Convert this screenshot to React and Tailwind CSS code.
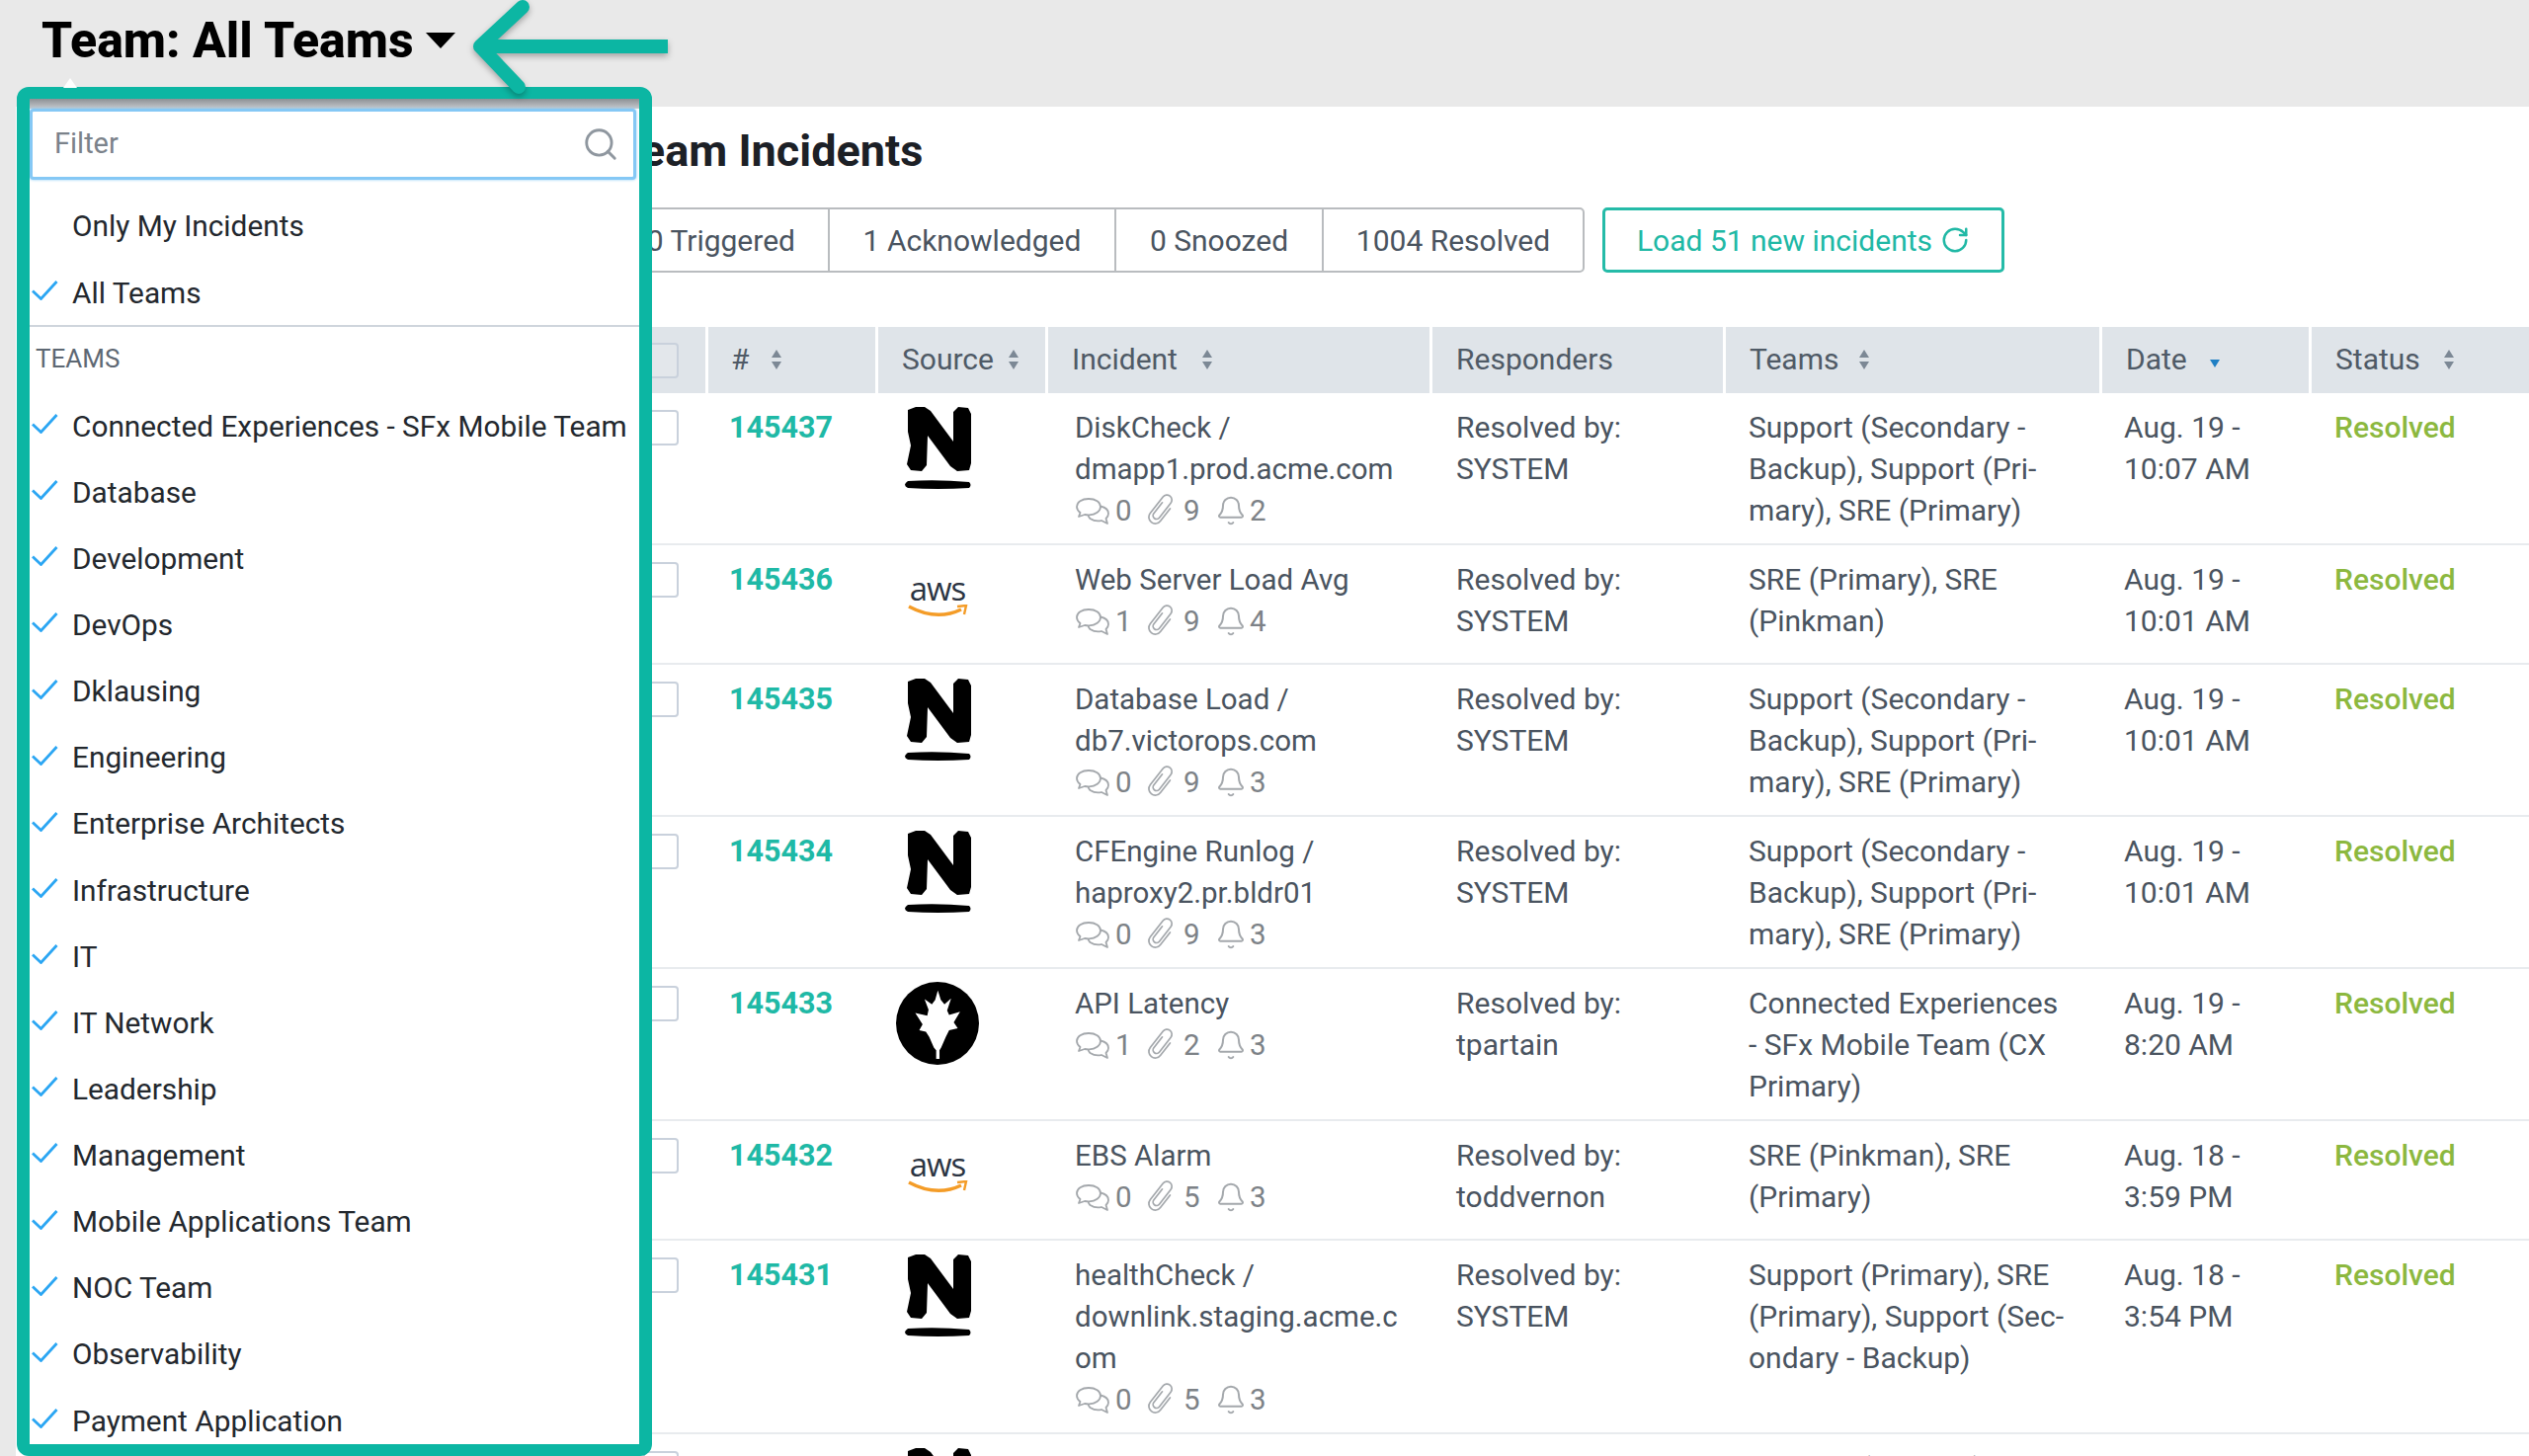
import React from "react";
import { Bell, Search, RotateCw } from "lucide-react";

const GRID = "grid grid-cols-[92px_172px_172px_389px_297px_381px_212px_222px]";
const HEAD_GRID = "grid grid-cols-[91px_172px_172px_389px_297px_381px_212px_223px]";
const SUPPORT = ["Support (Secondary -", "Backup), Support (Pri-", "mary), SRE (Primary)"];
const rows = [
  { id: "145437", logo: "n", inc: ["DiskCheck /", "dmapp1.prod.acme.com"], c: [0, 9, 2], by: "SYSTEM", teams: SUPPORT, date: ["Aug. 19 -", "10:07 AM"] },
  { id: "145436", logo: "aws", inc: ["Web Server Load Avg"], c: [1, 9, 4], by: "SYSTEM", teams: ["SRE (Primary), SRE", "(Pinkman)"], date: ["Aug. 19 -", "10:01 AM"] },
  { id: "145435", logo: "n", inc: ["Database Load /", "db7.victorops.com"], c: [0, 9, 3], by: "SYSTEM", teams: SUPPORT, date: ["Aug. 19 -", "10:01 AM"] },
  { id: "145434", logo: "n", inc: ["CFEngine Runlog /", "haproxy2.pr.bldr01"], c: [0, 9, 3], by: "SYSTEM", teams: SUPPORT, date: ["Aug. 19 -", "10:01 AM"] },
  { id: "145433", logo: "oak", inc: ["API Latency"], c: [1, 2, 3], by: "tpartain", teams: ["Connected Experiences", "- SFx Mobile Team (CX", "Primary)"], date: ["Aug. 19 -", "8:20 AM"] },
  { id: "145432", logo: "aws", inc: ["EBS Alarm"], c: [0, 5, 3], by: "toddvernon", teams: ["SRE (Pinkman), SRE", "(Primary)"], date: ["Aug. 18 -", "3:59 PM"] },
  { id: "145431", logo: "n", inc: ["healthCheck /", "downlink.staging.acme.c", "om"], c: [0, 5, 3], by: "SYSTEM", teams: ["Support (Primary), SRE", "(Primary), Support (Sec-", "ondary - Backup)"], date: ["Aug. 18 -", "3:54 PM"] },
  { id: "145430", logo: "n", inc: ["DiskCheck /"], c: [0, 5, 3], by: "SYSTEM", teams: ["Support (Primary), SRE"], date: ["Aug. 18 -"] },
];
const teams = ["Connected Experiences - SFx Mobile Team", "Database", "Development", "DevOps", "Dklausing", "Engineering", "Enterprise Architects", "Infrastructure", "IT", "IT Network", "Leadership", "Management", "Mobile Applications Team", "NOC Team", "Observability", "Payment Application"];

function Lines({ items }) {
  return items.map((t) => <div key={t} className="whitespace-nowrap">{t}</div>);
}
function Sort({ className = "" }) {
  return (
    <svg width="12" height="22" viewBox="0 0 12 22" className={className}>
      <path d="M6 1 L11 9 H1 Z M6 21 L11 13 H1 Z" fill="#7c8895" />
    </svg>
  );
}
function Check() {
  return (
    <svg width="27" height="20" viewBox="0 0 27 20" className="shrink-0" fill="none">
      <path d="M1 10.5 L9.5 18.5 L25.5 1" stroke="#2ba6f3" strokeWidth="2.8" />
    </svg>
  );
}
function NLogo() {
  return (
    <svg width="68" height="84" viewBox="0 0 68 84" className="ml-[8px]">
      <path d="M4 4 L12 1 L21 1 L27 5 L50 36 L50 6 L55 1 L65 2 L68 8 L68 58 L66 65 L54 66 L47 61 L24 30 L23 60 L18 66 L7 65 L3 59 L7 40 L4 26 Z" fill="#000" />
      <path d="M4 76 Q34 74 66 77 Q69 80 66 83 Q34 85 4 83 Q-2 80 4 76 Z" fill="#000" />
    </svg>
  );
}
function AwsLogo() {
  return (
    <div className="flex h-[78px] w-[84px] flex-col items-center justify-center">
      <span className="font-['Open_Sans',sans-serif] text-[33px] font-medium leading-[26px] tracking-[-1px] text-[#2b3442]">aws</span>
      <svg width="62" height="14" viewBox="0 0 62 14" className="mt-[3px]" fill="none">
        <path d="M2 2 Q30 17 55 5" stroke="#f49c27" strokeWidth="3.4" />
        <path d="M51 2 L60 1 L58 10" stroke="#f49c27" strokeWidth="2.4" />
      </svg>
    </div>
  );
}
function OakLogo() {
  return (
    <svg width="84" height="84" viewBox="52 40 250 250">
      <circle cx="177" cy="165" r="125" fill="#000" />
      <polygon fill="#fff" points="178,66 187,94 198,108 218,90 206,126 212,140 245,130 226,162 238,180 212,186 202,206 188,238 183,246 183,272 173,272 173,246 166,238 152,206 142,190 122,186 132,168 110,134 146,142 150,124 138,92 160,108 170,94" />
    </svg>
  );
}
function Comments() {
  return (
    <svg width="36" height="28" viewBox="0 0 36 28" fill="none" stroke="#a4a8ac" strokeWidth="1.8" strokeLinejoin="round">
      <path d="M14 2 C7 2 2 5.5 2 10 C2 12.5 3.5 14.5 5.5 16 L4 20 L10 18 C11.5 18.3 13 18.5 14.5 18.4 C21 18 26 14.5 26 10 C26 5.5 21 2 14 2 Z" />
      <path d="M26 9.5 C31 10.5 34 13.5 34 17 C34 19 33 20.6 31.5 22 L33 27 L27 24 C23 25 18.5 24 15.5 22 C14.5 21 13.8 20 13.5 18.6" />
    </svg>
  );
}
function Clip() {
  return (
    <svg width="38" height="38" viewBox="-4 -2 38 38" fill="none" stroke="#a4a8ac" strokeWidth="1.7" strokeLinecap="round" className="ml-[5px]">
      <g transform="rotate(38 15 16)">
        <path d="M11 10 V24 a3.5 3.5 0 0 0 7 0 V5 a5 5 0 0 0 -10 0 V26 a6.5 6.5 0 0 0 13 0 V10" />
      </g>
    </svg>
  );
}
function Meta({ c }) {
  return (
    <div className="flex h-[42px] items-center text-[#7d8287]">
      <Comments />
      <span className="ml-[5px] w-[23px]">{c[0]}</span>
      <Clip />
      <span className="ml-[3px] w-[23px]">{c[1]}</span>
      <Bell size={32} strokeWidth={1.5} color="#a4a8ac" className="ml-[9px]" />
      <span className="ml-[3px]">{c[2]}</span>
    </div>
  );
}
function Box({ header }) {
  return <div className={`h-[36px] w-[36px] rounded-[4px] border-2 border-[#c9d1dc] ${header ? "bg-[#e3e7eb]" : "bg-white"}`} />;
}
function HeadCell({ label, sort, gap, blue, pad = "pl-[24px]" }) {
  return (
    <div className={`flex items-center pb-[2px] ${pad}`}>
      <span>{label}</span>
      {sort && <Sort className={gap} />}
      {blue && (
        <svg width="12" height="8" viewBox="0 0 12 8" className={`${gap} mt-[8px]`}>
          <path d="M1 0 H11 L6 8 Z" fill="#1f7fc4" />
        </svg>
      )}
    </div>
  );
}

function Dropdown() {
  return (
    <div className="absolute left-[17px] top-[88px] flex h-[1386px] w-[643px] flex-col overflow-hidden rounded-[12px] border-x-[13px] border-y-[12px] border-[#0cb6a3] bg-white text-[29.8px]">
      <div className="h-[10px] shrink-0 bg-gradient-to-b from-[#8d9095] to-[#c6cace]" />
      <div className="mr-[3px] flex h-[72px] shrink-0 items-center justify-between rounded-[4px] border-[3px] border-[#85c8f5] bg-white pl-[22px] pr-[14px] text-[#7b828a] shadow-[0_0_3px_#85c8f5]">
        <span className="text-[29px]">Filter</span>
        <Search size={38} strokeWidth={1.8} color="#8f979f" />
      </div>
      <div className="mt-[14px] flex h-[66px] shrink-0 items-center pl-[43px] text-[#23282e]">Only My Incidents</div>
      <div className="flex h-[67px] shrink-0 items-center pt-[3px] text-[#23282e]">
        <span className="ml-[2px] w-[41px] -translate-y-[3px]"><Check /></span>All Teams
      </div>
      <div className="h-[2px] shrink-0 bg-[#cfd5dc]" />
      <div className="flex h-[67.5px] shrink-0 items-center pb-[2px] pl-[6px] text-[26px] text-[#5e6873]">TEAMS</div>
      {teams.map((t) => (
        <div key={t} className="flex h-[67.13px] shrink-0 items-center whitespace-nowrap text-[#23282e]">
          <span className="ml-[2px] w-[41px] -translate-y-[3px]"><Check /></span>{t}
        </div>
      ))}
    </div>
  );
}

export default function App() {
  return (
    <div className="relative flex h-[1474px] w-[2560px] flex-col overflow-hidden bg-[#e9e9e9] font-['Roboto',sans-serif] text-[30px] text-[#4a5460]">
      <header className="flex h-[108px] shrink-0 items-center pl-[42px] pb-[26px] font-extrabold text-black">
        <span className="text-[50px]">Team: All Teams</span>
        <svg width="30" height="16" viewBox="0 0 30 16" className="ml-[12px]">
          <path d="M0 0 H30 L15 16 Z" fill="#000" />
        </svg>
      </header>
      <main className="ml-[16px] flex-1 bg-white pl-[607px]">
        <h1 className="mt-[24px] whitespace-nowrap text-[45px] font-bold leading-[42px] text-[#1c2026]">Team Incidents</h1>
        <div className="mt-[36px] flex h-[66px]">
          <div className="flex rounded-[5px] border-2 border-[#b9bcbf]">
            <div className="flex w-[213px] items-center justify-end pr-[33px]">0 Triggered</div>
            <div className="flex w-[290px] items-center justify-center border-l-2 border-[#b9bcbf]">1 Acknowledged</div>
            <div className="flex w-[210px] items-center justify-center border-l-2 border-[#b9bcbf]">0 Snoozed</div>
            <div className="flex w-[264px] items-center justify-center border-l-2 border-[#b9bcbf]">1004 Resolved</div>
          </div>
          <div className="ml-[18px] flex w-[407px] items-center justify-center gap-[8px] rounded-[5px] border-[3px] border-[#25bba8] text-[#20b8a5]">
            Load 51 new incidents <RotateCw size={30} strokeWidth={2} />
          </div>
        </div>
        <div className={`${HEAD_GRID} mt-[55px] h-[67px] bg-[#dfe4e9] text-[#4f5a66] [&>div]:border-l-[3px] [&>div]:border-white [&>div:first-child]:border-l-0`}>
          <div className="flex items-center justify-end pr-[27px]"><Box header /></div>
          <HeadCell label="#" sort gap="ml-[22px]" pad="pl-[23px]" />
          <HeadCell label="Source" sort gap="ml-[14px]" />
          <HeadCell label="Incident" sort gap="ml-[24px]" />
          <HeadCell label="Responders" />
          <HeadCell label="Teams" sort gap="ml-[20px]" />
          <HeadCell label="Date" blue gap="ml-[22px]" />
          <HeadCell label="Status" sort gap="ml-[23px]" />
        </div>
        {rows.map((r) => (
          <div key={r.id} className={`${GRID} border-b-2 border-[#e8ebee] leading-[42px]`}>
            <div className="flex justify-end pr-[28px] pt-[17px]"><Box /></div>
            <div className="pl-[23px] pt-[13.5px] text-[30.5px] font-bold text-[#1fb9a6]">{r.id}</div>
            <div className="pb-[22px] pl-[20px] pt-[13px]">
              {r.logo === "n" && <NLogo />}
              {r.logo === "aws" && <div className="pb-[6px]"><AwsLogo /></div>}
              {r.logo === "oak" && <OakLogo />}
            </div>
            <div className="pb-[12.5px] pl-[29px] pt-[13.5px] text-[29.5px]">
              <Lines items={r.inc} />
              <Meta c={r.c} />
            </div>
            <div className="pl-[26px] pt-[13.5px]">
              <div>Resolved by:</div>
              <div>{r.by}</div>
            </div>
            <div className="pb-[12.5px] pl-[25px] pt-[13.5px]"><Lines items={r.teams} /></div>
            <div className="pl-[24px] pt-[13.5px]"><Lines items={r.date} /></div>
            <div className="pl-[25px] pt-[13.5px] font-medium text-[#8cb83f]">Resolved</div>
          </div>
        ))}
      </main>
      <Dropdown />
      <svg width="14" height="10" viewBox="0 0 14 10" className="absolute left-[64px] top-[79px]">
        <path d="M0 10 L7 0 L14 10 Z" fill="#fff" />
      </svg>
      <svg width="210" height="100" viewBox="0 0 210 100" className="absolute left-[475px] top-0 drop-shadow-[0_3px_3px_rgba(0,0,0,0.3)]" fill="none">
        <path d="M54 7 L11 47 L50 88" stroke="#0cb6a3" strokeWidth="14" strokeLinecap="round" strokeLinejoin="round" />
        <path d="M11 47 H201" stroke="#0cb6a3" strokeWidth="14" />
      </svg>
    </div>
  );
}
